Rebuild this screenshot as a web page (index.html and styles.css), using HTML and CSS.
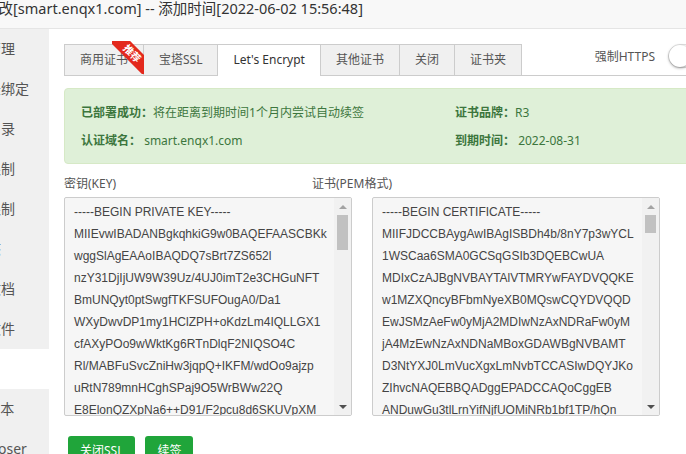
FILE: index.html
```html
<!DOCTYPE HTML>
<html lang="zh-CN">
<head>
	<meta charset="UTF-8">
	<title>站点修改 - SSL</title>
    <link rel="stylesheet" href="styles.css">
</head>
<body>
<div class="page">
    <div class="title">站点修改[smart.enqx1.com] -- 添加时间[2022-06-02 15:56:48]</div>
    <div class="layout">
        <ul class="menu">
            <li>域名管理</li>
            <li>子目录绑定</li>
            <li>网站目录</li>
            <li>访问限制</li>
            <li>流量限制</li>
            <li>伪静态</li>
            <li>默认文档</li>
            <li>配置文件</li>
            <li class="on">SSL</li>
            <li>PHP版本</li>
            <li>Composer</li>
        </ul>
        <div class="main">
            <div class="tabs">
                <span class="tab">商用证书<i class="ribbon"><b>推荐</b></i></span>
                <span class="tab">宝塔SSL</span>
                <span class="tab on">Let's Encrypt</span>
                <span class="tab">其他证书</span>
                <span class="tab">关闭</span>
                <span class="tab">证书夹</span>
                <div class="https">强制HTTPS<span class="switch"></span></div>
            </div>
            <div class="alert">
                <div class="alert-col">
                    <p><b>已部署成功：</b>将在距离到期时间1个月内尝试自动续签</p>
                    <p><b>认证域名：</b> smart.enqx1.com</p>
                </div>
                <div class="alert-col">
                    <p><b>证书品牌：</b>R3</p>
                    <p><b>到期时间：</b> 2022-08-31</p>
                </div>
            </div>
            <div class="pem-labels">
                <span class="pem-key">密钥(KEY)</span>
                <span>证书(PEM格式)</span>
            </div>
            <div class="pem-boxes">
                <div class="pem">
                    <div class="pem-text">-----BEGIN PRIVATE KEY-----
MIIEvwIBADANBgkqhkiG9w0BAQEFAASCBKk
wggSlAgEAAoIBAQDQ7sBrt7ZS652l
nzY31DjIjUW9W39Uz/4UJ0imT2e3CHGuNFT
BmUNQyt0ptSwgfTKFSUFOugA0/Da1
WXyDwvDP1my1HClZPH+oKdzLm4IQLLGX1
cfAXyPOo9wWktKg6RTnDlqF2NIQSO4C
Rl/MABFuSvcZniHw3jqpQ+IKFM/wdOo9ajzp
uRtN789mnHCghSPaj9O5WrBWw22Q
E8ElonQZXpNa6++D91/F2pcu8d6SKUVpXM</div>
                    <div class="scrollbar">
                        <span class="arrow up"></span>
                        <span class="track"><span class="thumb"></span></span>
                        <span class="arrow down"></span>
                    </div>
                </div>
                <div class="pem">
                    <div class="pem-text">-----BEGIN CERTIFICATE-----
MIIFJDCCBAygAwIBAgISBDh4b/8nY7p3wYCL
1WSCaa6SMA0GCSqGSIb3DQEBCwUA
MDIxCzAJBgNVBAYTAlVTMRYwFAYDVQQKE
w1MZXQncyBFbmNyeXB0MQswCQYDVQQD
EwJSMzAeFw0yMjA2MDIwNzAxNDRaFw0yM
jA4MzEwNzAxNDNaMBoxGDAWBgNVBAMT
D3NtYXJ0LmVucXgxLmNvbTCCASIwDQYJKo
ZIhvcNAQEBBQADggEPADCCAQoCggEB
ANDuwGu3tlLrnYifNjfUOMiNRb1bf1TP/hQn</div>
                    <div class="scrollbar">
                        <span class="arrow up"></span>
                        <span class="track"><span class="thumb short"></span></span>
                        <span class="arrow down"></span>
                    </div>
                </div>
            </div>
            <div class="actions">
                <a href="#" class="btn">关闭SSL</a>
                <a href="#" class="btn">续签</a>
            </div>
        </div>
    </div>
</div>
</body>
</html>
```

FILE: styles.css
```css
/* Reset */
body,div,span,a,p,ul,li,b,i {
    margin: 0;
    padding: 0;
}
body {
    font: 12px "Noto Sans", "Noto Sans CJK SC", sans-serif;
    color: #333;
    background: #fff;
    overflow: hidden;
}
ul {
    list-style: none;
}
a {
    text-decoration: none;
}
b, i {
    font-style: normal;
}

/* Dialog */
.page {
    width: 712px;
}
.title {
    height: 28px;
    line-height: 16px;
    font-size: 14.5px;
    color: #333;
    text-indent: -45px;
    white-space: nowrap;
    background: #f8f8f8;
    border-bottom: 1px solid #e5e5e5;
}
.layout {
    display: flex;
    height: 425px;
}

/* Side menu */
.menu {
    flex: none;
    width: 49px;
    overflow: hidden;
    background: #f0f0f0;
}
.menu li {
    height: 40px;
    line-height: 40px;
    font-size: 14px;
    color: #555;
    white-space: nowrap;
    text-indent: -41px;
}
.menu .on {
    background: #fff;
}

/* Main */
.main {
    flex: 1;
    min-width: 0;
    padding: 15px 0 0 15px;
}
.tabs {
    display: flex;
    align-items: flex-end;
    height: 31px;
    border-bottom: 1px solid #ccc;
}
.tab {
    position: relative;
    height: 30px;
    line-height: 30px;
    padding: 0 15px;
    color: #555;
    background: #f0f0f0;
    border: 1px solid #ccc;
    border-bottom: none;
    border-left: none;
}
.tab:first-child {
    border-left: 1px solid #ccc;
}
.tab.on {
    height: 31px;
    margin-bottom: -1px;
    color: #333;
    background: #fff;
}
.ribbon {
    position: absolute;
    top: -4px;
    right: -2px;
    width: 33px;
    height: 33px;
    overflow: hidden;
}
.ribbon b {
    position: absolute;
    top: 5px;
    left: -4px;
    width: 48px;
    height: 15px;
    line-height: 15px;
    font-size: 10px;
    font-weight: bold;
    text-align: center;
    color: #fff;
    background: #e3291d;
    transform: rotate(45deg);
}
.https {
    display: flex;
    align-items: center;
    align-self: flex-start;
    gap: 13px;
    height: 24px;
    margin-left: auto;
    color: #555;
}
.switch {
    position: relative;
    width: 42px;
    height: 22px;
    border: 1px solid #dfdfdf;
    border-radius: 12px;
    background: #fafbfa;
}
.switch:before {
    content: "";
    position: absolute;
    top: 0;
    left: 0;
    width: 22px;
    height: 22px;
    border-radius: 50%;
    background: #fff;
    box-shadow: 0 1px 3px rgba(0,0,0,.4);
}

/* Status */
.alert {
    display: flex;
    margin-top: 12px;
    padding: 10px 0 8px 16px;
    line-height: 28px;
    color: #3c763d;
    background: #dff0d8;
    border: 1px solid #d6e9c6;
    border-radius: 4px;
}
.alert-col:first-child {
    width: 374px;
}

/* PEM */
.pem-labels {
    display: flex;
    margin-top: 10px;
    line-height: 20px;
    color: #555;
}
.pem-key {
    width: 248px;
}
.pem-boxes {
    display: flex;
    gap: 20px;
    margin-top: 3px;
}
.pem {
    display: flex;
    width: 286px;
    height: 217px;
    background: #f6f6f6;
    border: 1px solid #ccc;
    border-radius: 2px;
    overflow: hidden;
}
.pem-text {
    flex: 1;
    min-width: 0;
    padding: 3px 0 0 9px;
    line-height: 22px;
    font: 12px/22px "Liberation Sans", "Noto Sans CJK SC", sans-serif;
    color: #444;
    white-space: pre;
    overflow: hidden;
}
.scrollbar {
    display: flex;
    flex-direction: column;
    flex: none;
    width: 17px;
    background: #f1f1f1;
}
.arrow {
    display: flex;
    align-items: center;
    justify-content: center;
    height: 17px;
}
.arrow:before {
    content: "";
    border-left: 4px solid transparent;
    border-right: 4px solid transparent;
}
.arrow.up:before {
    border-bottom: 4px solid #a3a3a3;
}
.arrow.down:before {
    border-top: 4px solid #505050;
}
.track {
    flex: 1;
    padding: 0 3px;
}
.thumb {
    display: block;
    height: 35px;
    background: #c1c1c1;
}
.thumb.short {
    height: 18px;
}

/* Buttons */
.actions {
    display: flex;
    gap: 10px;
    margin-top: 20px;
    padding-left: 4px;
}
.btn {
    height: 30px;
    line-height: 30px;
    padding: 0 12px;
    color: #fff;
    background: #20a53a;
    border-radius: 3px;
}
```
